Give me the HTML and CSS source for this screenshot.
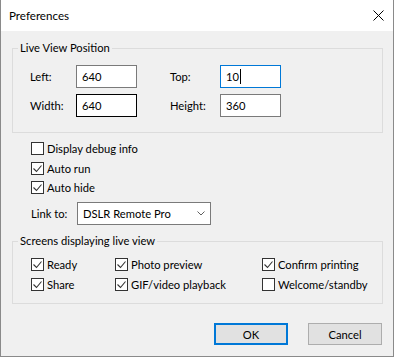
FILE: index.html
```
<!DOCTYPE html>
<html>
<head>
<meta charset="utf-8">
<link rel="stylesheet" href="styles.css">
</head>
<body>
<div class="window">
  <div class="titlebar">
    <span class="title">Preferences</span>
    <svg class="close" width="11" height="11" viewBox="0 0 11 11"><path d="M0.5 0.5 L10.5 10.5 M10.5 0.5 L0.5 10.5" stroke="#000" stroke-width="1" fill="none"/></svg>
  </div>
  <div class="content">
    <fieldset class="group">
      <legend>Live View Position</legend>
      <div class="pos-grid">
        <label class="lbl">Left:</label>
        <input class="tb" value="640" readonly>
        <label class="lbl">Top:</label>
        <div class="tb focused"><span>10</span><span class="caret"></span></div>
        <label class="lbl">Width:</label>
        <input class="tb hover" value="640" readonly>
        <label class="lbl">Height:</label>
        <input class="tb" value="360" readonly>
      </div>
    </fieldset>

    <div class="checks">
      <div class="chk"><span class="box"></span><span>Display debug info</span></div>
      <div class="chk"><span class="box checked"><svg viewBox="0 0 11 11" width="11" height="11"><path d="M1.5 5.5 L4.5 8.5 L9.5 2.5" stroke="#333" stroke-width="1.1" fill="none"/></svg></span><span>Auto run</span></div>
      <div class="chk"><span class="box checked"><svg viewBox="0 0 11 11" width="11" height="11"><path d="M1.5 5.5 L4.5 8.5 L9.5 2.5" stroke="#333" stroke-width="1.1" fill="none"/></svg></span><span>Auto hide</span></div>
    </div>

    <div class="link-row">
      <span class="lbl">Link to:</span>
      <div class="select"><span>DSLR Remote Pro</span><svg width="8" height="5" viewBox="0 0 8 5"><path d="M0.5 0.5 L4 4 L7.5 0.5" stroke="#606060" stroke-width="1" fill="none"/></svg></div>
    </div>

    <fieldset class="group group2">
      <legend>Screens displaying live view</legend>
      <div class="screens">
        <div class="chk"><span class="box checked"><svg viewBox="0 0 11 11" width="11" height="11"><path d="M1.5 5.5 L4.5 8.5 L9.5 2.5" stroke="#333" stroke-width="1.1" fill="none"/></svg></span><span>Ready</span></div>
        <div class="chk"><span class="box checked"><svg viewBox="0 0 11 11" width="11" height="11"><path d="M1.5 5.5 L4.5 8.5 L9.5 2.5" stroke="#333" stroke-width="1.1" fill="none"/></svg></span><span>Photo preview</span></div>
        <div class="chk"><span class="box checked"><svg viewBox="0 0 11 11" width="11" height="11"><path d="M1.5 5.5 L4.5 8.5 L9.5 2.5" stroke="#333" stroke-width="1.1" fill="none"/></svg></span><span>Confirm printing</span></div>
        <div class="chk"><span class="box checked"><svg viewBox="0 0 11 11" width="11" height="11"><path d="M1.5 5.5 L4.5 8.5 L9.5 2.5" stroke="#333" stroke-width="1.1" fill="none"/></svg></span><span>Share</span></div>
        <div class="chk"><span class="box checked"><svg viewBox="0 0 11 11" width="11" height="11"><path d="M1.5 5.5 L4.5 8.5 L9.5 2.5" stroke="#333" stroke-width="1.1" fill="none"/></svg></span><span>GIF/video playback</span></div>
        <div class="chk"><span class="box"></span><span>Welcome/standby</span></div>
      </div>
    </fieldset>

    <div class="buttons">
      <button class="btn default">OK</button>
      <button class="btn">Cancel</button>
    </div>
  </div>
</div>
</body>
</html>
```
FILE: styles.css
```
* { box-sizing: border-box; }
body {
  margin: 0;
  font-family: Lato, "Noto Sans", sans-serif;
  font-size: 11.2px;
  color: #000;
  background: #fff;
}
.window {
  width: 394px;
  height: 357px;
  background: #f0f0f0;
  border: 1px solid #8a8a8a;
  border-top: none;
  display: flex;
  flex-direction: column;
}
.titlebar {
  height: 31px;
  flex: none;
  background: #fff;
  display: flex;
  align-items: center;
  justify-content: space-between;
  padding: 0 9px 0 8px;
}
.title { line-height: 16px; font-size: 11.6px; }
.close { display: block; }
.content {
  padding: 9px 10px 0 11px;
  display: flex;
  flex-direction: column;
}
.group {
  margin: 0;
  padding: 0;
  border: 1px solid #dcdcdc;
  min-width: 0;
}
.group legend {
  padding: 0 2px;
  margin-left: 5px;
  line-height: 16px;
}
.pos-grid {
  display: grid;
  grid-template-columns: 46px 61px 33px 50px 61px;
  grid-auto-rows: 23px;
  row-gap: 6px;
  align-items: center;
  padding: 9px 0 15px 17px;
}
.pos-grid .lbl:nth-of-type(2),
.pos-grid .lbl:nth-of-type(4) { grid-column: 4; }
.tb {
  width: 61px;
  height: 23px;
  border: 1px solid #7a7a7a;
  background: #fff;
  font: inherit;
  color: #000;
  padding: 0 0 0 5px;
  margin: 0;
  outline: none;
  display: flex;
  align-items: center;
}
.tb.hover { border-color: #000; }
.tb.focused { border-color: #0078d7; }
.caret {
  display: inline-block;
  width: 1px;
  height: 15px;
  background: #000;
  margin-left: 1px;
}
.checks {
  margin-top: 6px;
  padding-left: 19px;
}
.chk {
  height: 19.5px;
  display: flex;
  align-items: center;
  gap: 3px;
  white-space: nowrap;
}
.box {
  width: 13px;
  height: 13px;
  flex: none;
  border: 1px solid #333;
  background: #fff;
  display: flex;
  align-items: center;
  justify-content: center;
}
.box svg { display: block; }
.link-row {
  margin-top: 4.5px;
  padding-left: 19px;
  display: flex;
  align-items: center;
}
.link-row .lbl { width: 46px; }
.select {
  width: 134px;
  height: 23px;
  border: 1px solid #7a7a7a;
  background: #fff;
  display: flex;
  align-items: center;
  justify-content: space-between;
  padding: 0 5px 0 5px;
}
.select svg { display: block; }
.group2 { margin-top: 8px; }
.screens {
  display: grid;
  grid-template-columns: 84px 147px 1fr;
  grid-auto-rows: 20px;
  padding: 5px 0 9px 18px;
}
.screens .chk { height: 20px; }
.buttons {
  margin-top: 19px;
  display: flex;
  justify-content: flex-end;
  gap: 20px;
  padding-right: 1px;
}
.btn {
  width: 74px;
  height: 22px;
  margin: 0;
  padding: 0;
  border: 1px solid #adadad;
  background: #e1e1e1;
  font: inherit;
  color: #000;
}
.btn.default { border: 2px solid #0078d7; }
```
